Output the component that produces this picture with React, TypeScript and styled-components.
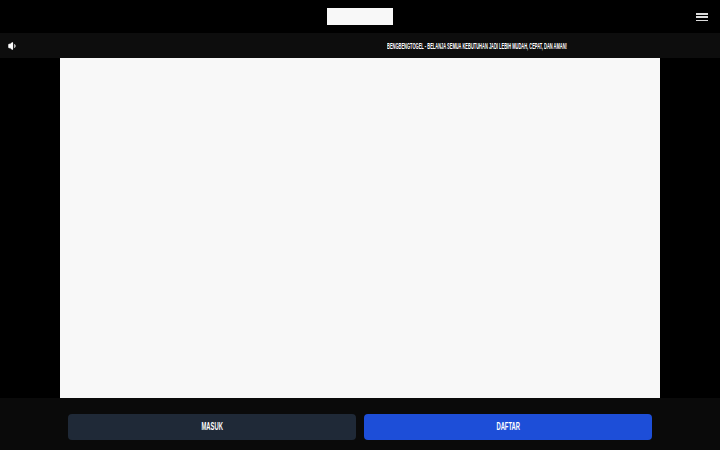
import React, { JSX } from 'react'
import styled, { createGlobalStyle } from 'styled-components'
import { Volume1 } from 'lucide-react'

const Global = createGlobalStyle`
  html, body {
    margin: 0;
    padding: 0;
    background-color: #000;
  }
`

const Page = styled.div`
  width: 720px;
  height: 450px;
  display: flex;
  flex-direction: column;
  overflow: hidden;
  background-color: #000;
  font-family: "Liberation Sans", sans-serif;
  font-weight: 700;
  color: #fff;
`

const Header = styled.div`
  position: relative;
  height: 33px;
  flex-shrink: 0;
  display: flex;
  justify-content: center;
  align-items: flex-start;
  padding-top: 8px;
  box-sizing: border-box;
`

const Logo = styled.div`
  width: 66px;
  height: 17px;
  background-color: #f8f8f8;
`

const Burger = styled.div`
  position: absolute;
  right: 12px;
  top: 13px;
  width: 12px;
  display: flex;
  flex-direction: column;
  gap: 1.75px;
`

const BurgerLine = styled.span`
  display: block;
  height: 1.5px;
  background-color: #dcdcdc;
`

const Ticker = styled.div`
  height: 25px;
  flex-shrink: 0;
  display: flex;
  align-items: center;
  overflow: hidden;
  background-color: #0d0d0d;
  padding-left: 8px;
`

const SpeakerIcon = styled(Volume1)`
  flex-shrink: 0;
`

const TickerText = styled.span`
  flex-shrink: 0;
  margin-left: 369px;
  padding-top: 1px;
  font-size: 8.5px;
  line-height: 24px;
  white-space: nowrap;
  transform: scaleX(0.47);
  transform-origin: left center;
  display: inline-block;
`

const Main = styled.div`
  flex: 1;
  display: flex;
  justify-content: center;
`

const Panel = styled.div`
  width: 600px;
  background-color: #f8f8f8;
`

const Footer = styled.div`
  height: 52px;
  flex-shrink: 0;
  box-sizing: border-box;
  padding: 16px 68px 10px;
  display: flex;
  gap: 8px;
  background-color: #0a0a0a;
`

const Button = styled.div<{ $bg: string }>`
  flex: 1;
  display: flex;
  align-items: center;
  justify-content: center;
  padding-bottom: 2px;
  border-radius: 4px;
  background-color: ${(props) => props.$bg};
  font-size: 11px;
`

const ButtonLabel = styled.span`
  display: inline-block;
  transform: scaleX(0.53);
`

const App = (): JSX.Element => {
  return (
    <Page>
      <Global />
      <Header>
        <Logo />
        <Burger>
          <BurgerLine />
          <BurgerLine />
          <BurgerLine />
        </Burger>
      </Header>
      <Ticker>
        <SpeakerIcon size={10} color='#fff' fill='#fff' strokeWidth={2.5} />
        <TickerText>BENGBENGTOGEL - BELANJA SEMUA KEBUTUHAN JADI LEBIH MUDAH, CEPAT, DAN AMAN!</TickerText>
      </Ticker>
      <Main>
        <Panel />
      </Main>
      <Footer>
        <Button $bg='#1f2937'><ButtonLabel>MASUK</ButtonLabel></Button>
        <Button $bg='#1d4ed8'><ButtonLabel>DAFTAR</ButtonLabel></Button>
      </Footer>
    </Page>
  )
}

export default App
